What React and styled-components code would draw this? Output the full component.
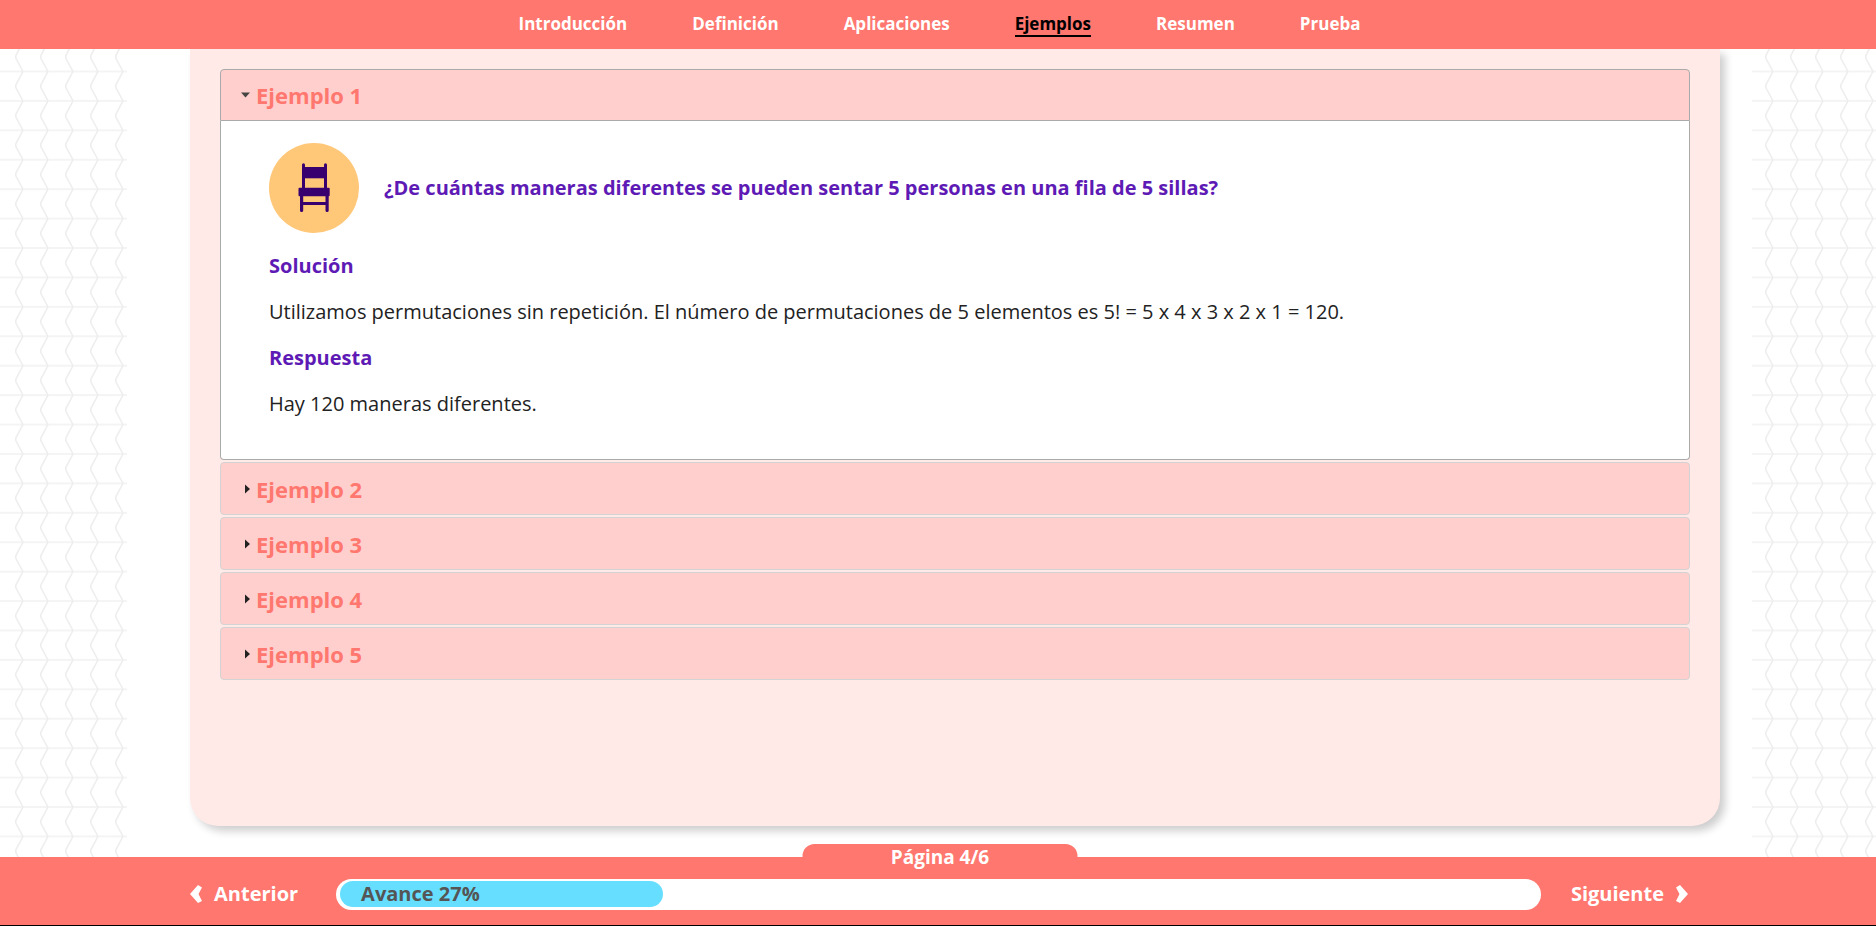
import React, { useState } from "react";
import styled, { createGlobalStyle } from "styled-components";

const coral = "#ff776e";
const purple = "#5e1ab5";

const GlobalStyle = createGlobalStyle`
  *, *::before, *::after { box-sizing: border-box; }
  body {
    margin: 0;
    background: #fff;
    color: #222;
    font: 400 20px/30px "Open Sans", "Noto Sans", sans-serif;
  }
`;

const Page = styled.div`
  position: relative;
  display: flex;
  flex-direction: column;
  min-height: 100vh;
`;

const Backdrop = styled.svg`
  position: absolute;
  inset: 0;
  width: 100%;
  height: 100%;
  z-index: -1;
`;

const TopNav = styled.nav`
  position: sticky;
  top: 0;
  z-index: 1;
  display: flex;
  justify-content: center;
  gap: 65px;
  height: 49px;
  padding: 11px 0 0 3px;
  background: ${coral};
`;

const NavLink = styled.a`
  height: 26px;
  border-bottom: 2px solid ${(p) => (p.$active ? "#000" : "transparent")};
  color: ${(p) => (p.$active ? "#000" : "#fff")};
  font-size: 17px;
  line-height: 25px;
  font-weight: 700;
  text-decoration: none;
`;

const Main = styled.main`
  flex: 1;
  display: flex;
  margin: 0 124px 0 127px;
  padding: 0 32px 31px 63px;
  background: #fff;
`;

const Card = styled.section`
  flex: 1;
  min-width: 0;
  padding: 20px 30px 120px;
  border-radius: 0 0 28px 28px;
  background: #ffeae8;
  box-shadow: 5px 5px 8px rgba(0, 0, 0, 0.2);
`;

const Accordion = styled.div`
  display: flex;
  flex-direction: column;
  gap: 2px;
`;

const ItemTitle = styled.h3`
  margin: 0;
`;

const ItemButton = styled.button`
  display: flex;
  align-items: center;
  gap: 5px;
  width: 100%;
  height: ${(p) => (p.$open ? 52 : 53)}px;
  padding: 0 19px;
  border: 1px solid ${(p) => (p.$open ? "#aaa" : "#d3d3d3")};
  border-radius: ${(p) => (p.$open ? "4px 4px 0 0" : "4px")};
  background: #ffcfcd;
  color: ${coral};
  font: 700 22px/30px "Open Sans", "Noto Sans", sans-serif;
  text-align: left;
  cursor: pointer;
`;

const Arrow = styled.svg`
  flex: none;
  width: 11px;
  height: 16px;
  fill: ${(p) => (p.$open ? "#454545" : "#222")};
`;

const Panel = styled.div`
  display: flex;
  flex-direction: column;
  gap: 16px;
  padding: 22px 48px 40px;
  border: 1px solid #aaa;
  border-top: 0;
  border-radius: 0 0 4px 4px;
  background: #fff;
`;

const Question = styled.div`
  display: flex;
  align-items: center;
  gap: 25px;
  padding-bottom: 2px;
`;

const Picture = styled.svg`
  flex: none;
  width: 90px;
  height: 90px;
`;

const Strong = styled.h4`
  margin: 0;
  color: ${purple};
  font: 700 20px/30px "Open Sans", "Noto Sans", sans-serif;
`;

const Text = styled.p`
  margin: 0;
`;

const Footer = styled.footer`
  position: sticky;
  bottom: 0;
  display: flex;
  align-items: center;
  gap: 30px;
  height: 69px;
  padding: 6px 188px 0 190px;
  border-bottom: 1px solid #000;
  background: ${coral};
`;

const PageTab = styled.div`
  position: absolute;
  top: -13px;
  left: calc(50% + 2px);
  width: 275px;
  height: 30px;
  transform: translateX(-50%);
  border-radius: 12px 12px 0 0;
  background: ${coral};
  color: #fff;
  font-size: 19px;
  line-height: 26px;
  font-weight: 700;
  text-align: center;
`;

const StepButton = styled.button`
  display: flex;
  align-items: center;
  gap: 12px;
  padding: 0;
  border: 0;
  background: none;
  color: #fff;
  font: 700 20px/26px "Open Sans", "Noto Sans", sans-serif;
  cursor: pointer;
`;

const Chevron = styled.svg`
  width: 12px;
  height: 18px;
  fill: #fff;
`;

const Track = styled.div`
  flex: 1;
  height: 31px;
  margin-left: 8px;
  padding: 2px 4px;
  border-radius: 16px;
  background: #fff;
`;

const Fill = styled.div`
  height: 26px;
  padding-left: 21px;
  border-radius: 13px;
  background: #66deff;
  color: #555;
  font-size: 20px;
  line-height: 26px;
  font-weight: 700;
  white-space: nowrap;
`;

const sections = ["Introducción", "Definición", "Aplicaciones", "Ejemplos", "Resumen", "Prueba"];
const examples = [1, 2, 3, 4, 5];
const progress = 27;

function ChairPicture() {
  return (
    <Picture viewBox="0 0 90 90" role="img" aria-label="Silla">
      <circle cx="45" cy="45" r="45" fill="#ffc778" />
      <g fill="#38006f">
        <path d="M33 21.800a1.500 1.500 0 0 1 3 0V46H33zM55 21.800a1.500 1.500 0 0 1 3 0V46H55z" />
        <rect x="34" y="24" width="23" height="11.300" />
        <rect x="29.500" y="44.800" width="31.200" height="8.500" rx="1" />
        <path d="M31 52h3.200v15.500a1.600 1.500 0 0 1-3.200 0zM56.500 52h3.200v15.500a1.600 1.500 0 0 1-3.200 0z" />
        <rect x="33" y="59" width="25" height="3" />
      </g>
    </Picture>
  );
}

function ExampleOne() {
  return (
    <Panel id="panel-1" role="region" aria-labelledby="tab-1">
      <Question>
        <ChairPicture />
        <Strong>¿De cuántas maneras diferentes se pueden sentar 5 personas en una fila de 5 sillas?</Strong>
      </Question>
      <Strong>Solución</Strong>
      <Text>
        Utilizamos permutaciones sin repetición. El número de permutaciones de 5 elementos es 5! = 5 x 4 x 3 x 2 x 1 =
        120.
      </Text>
      <Strong>Respuesta</Strong>
      <Text>Hay 120 maneras diferentes.</Text>
    </Panel>
  );
}

export default function App() {
  const [open, setOpen] = useState(1);
  return (
    <Page>
      <GlobalStyle />
      <Backdrop aria-hidden="true">
        <defs>
          <pattern id="weave" width="25" height="29.420" patternUnits="userSpaceOnUse" y="71.500">
            <path d="M0 0H25M0 29.420H25" stroke="#f4f4f4" strokeWidth="2" />
            <path d="M23 0L15.800 13.500V16L23 29.420" fill="none" stroke="#ededed" strokeWidth="1.500" />
          </pattern>
        </defs>
        <rect width="100%" height="100%" fill="url(#weave)" />
      </Backdrop>
      <TopNav aria-label="Secciones">
        {sections.map((name) => (
          <NavLink key={name} href={"#" + name} $active={name === "Ejemplos"}>
            {name}
          </NavLink>
        ))}
      </TopNav>
      <Main>
        <Card>
          <Accordion>
            {examples.map((n) => (
              <div key={n}>
                <ItemTitle>
                  <ItemButton
                    id={"tab-" + n}
                    type="button"
                    $open={open === n}
                    aria-expanded={open === n}
                    onClick={() => setOpen(open === n ? 0 : n)}
                  >
                    <Arrow viewBox="0 0 11 16" $open={open === n} aria-hidden="true">
                      <path d={open === n ? "M1 5.500H10L5.500 10.500Z" : "M5 3.500L10 8L5 12.500Z"} />
                    </Arrow>
                    Ejemplo {n}
                  </ItemButton>
                </ItemTitle>
                {n === 1 && open === 1 && <ExampleOne />}
              </div>
            ))}
          </Accordion>
        </Card>
      </Main>
      <Footer>
        <PageTab>Página 4/6</PageTab>
        <StepButton type="button">
          <Chevron viewBox="0 0 12 18" aria-hidden="true">
            <path d="M8 0L12 2.500L8.500 9L12 16L8 18L0 9Z" />
          </Chevron>
          Anterior
        </StepButton>
        <Track role="progressbar" aria-label="Avance" aria-valuenow={progress} aria-valuemin={0} aria-valuemax={100}>
          <Fill style={{ width: progress + "%" }}>Avance {progress}%</Fill>
        </Track>
        <StepButton type="button">
          Siguiente
          <Chevron viewBox="0 0 12 18" aria-hidden="true">
            <path d="M4 0L0 2.500L3.500 9L0 16L4 18L12 9Z" />
          </Chevron>
        </StepButton>
      </Footer>
    </Page>
  );
}
